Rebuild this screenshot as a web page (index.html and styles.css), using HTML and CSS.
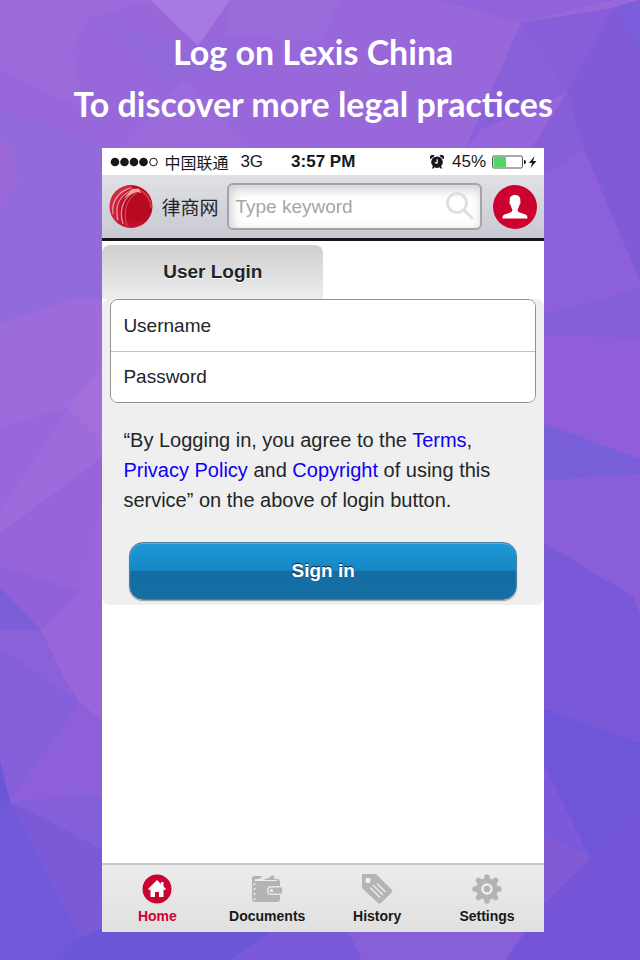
FILE: index.html
```
<!DOCTYPE html>
<html lang="en">
<head>
  <meta charset="utf-8">
  <meta name="viewport" content="width=device-width, initial-scale=1">
  <title>Lexis China - Login</title>
  <link rel="stylesheet" href="styles.css">
</head>
<body>
  <!-- low poly background -->
  <svg class="backdrop" viewBox="0 0 640 960" preserveAspectRatio="none" aria-hidden="true">
    <rect width="640" height="960" fill="#9867d9"/>
    <path fill="#9c6bdb" d="M0 0H150L88 18 72 48 85 110 0 70z"/>
    <path fill="#a67ae0" d="M150 0H230L198 46z"/>
    <path fill="#9369da" d="M88 18L198 46 225 35 250 62 186 80 173 92z"/>
    <path fill="#9a6bdb" d="M230 0H340L320 42 225 35z"/>
    <path fill="#9c6bdb" d="M186 80L250 150H120L173 92z"/>
    <path fill="#926ada" d="M0 110L30 120 110 150V299H70L0 324z"/>
    <path fill="#9b68d9" d="M0 140H8L20 182 0 209z"/>
    <path fill="#9c6cdc" d="M0 324L70 299H110V408H68L0 427z"/>
    <path fill="#a46fda" d="M68 408L110 356V450z"/>
    <path fill="#9967da" d="M0 427L68 408 0 511z"/>
    <path fill="#9e6bdc" d="M68 408L110 450V452L0 533V511z"/>
    <path fill="#9665da" d="M0 533L110 452V500L80 592 0 566z"/>
    <path fill="#9060d8" d="M0 566L80 592 41 630 0 587z"/>
    <path fill="#7a5fd9" d="M0 587L41 630H0z"/>
    <path fill="#9965da" d="M80 592L102 500H110V726L80 703 65 680 41 630z"/>
    <path fill="#8c60d9" d="M0 630H41L65 680 80 703 0 648z"/>
    <path fill="#845fd9" d="M0 648L80 703 10 801 0 760z"/>
    <path fill="#8d60da" d="M80 703L110 726V794L10 801z"/>
    <path fill="#7058d8" d="M0 801H10L80 938 110 925H300V960H0z"/>
    <path fill="#6956d8" d="M0 760L10 801H0z"/>
    <path fill="#835fd9" d="M10 801L110 794V853z"/>
    <path fill="#7b5ad8" d="M10 801L110 853V925L80 938z"/>
    <path fill="#6a57d7" d="M80 938L110 925H280L230 960H60z"/>
    <path fill="#9063da" d="M440 0H612L521 23z"/>
    <path fill="#875dd9" d="M612 8L521 23 567 93z"/>
    <path fill="#8a60da" d="M521 23L567 93 544 150H465z"/>
    <path fill="#9565db" d="M567 93L480 130 465 150H544z"/>
    <path fill="#865ed8" d="M567 93L584 150 530 184V150z"/>
    <path fill="#815ad8" d="M612 8L640 0V282L584 150 567 93z"/>
    <path fill="#7b5edc" d="M612 8L640 0V45z"/>
    <path fill="#8c60da" d="M530 184L584 150 640 282V288L530 318z"/>
    <path fill="#845fd9" d="M530 318L640 288V340L530 335z"/>
    <path fill="#905eda" d="M530 335L640 338V459L530 418z"/>
    <path fill="#7a5fda" d="M530 418L640 459V474L530 482z"/>
    <path fill="#8a5ed9" d="M530 482L640 474V615L634 597 530 534z"/>
    <path fill="#7a59d9" d="M530 534L634 597 640 615V743L530 703z"/>
    <path fill="#6f55d7" d="M530 703L640 743V807L590 859 530 738z"/>
    <path fill="#7b59d8" d="M530 738L590 859 530 828z"/>
    <path fill="#825ad6" d="M530 828L590 859 530 917z"/>
    <path fill="#7455d7" d="M590 859L640 807V960H500L530 917z"/>
    <path fill="#865fd9" d="M345 925H530L505 960H362z"/>
    <path fill="#785ad9" d="M280 925H345L362 960H230z"/>
  </svg>

  <h1 class="headline">Log on Lexis China<br>To discover more legal practices</h1>

  <div class="phone">
    <div class="status">
      <svg class="signal" viewBox="0 0 48 10" aria-label="Signal strength">
        <circle cx="5" cy="5" r="4.300"/><circle cx="14.500" cy="5" r="4.300"/><circle cx="24" cy="5" r="4.300"/><circle cx="33.500" cy="5" r="4.300"/>
        <circle class="empty" cx="43.500" cy="5" r="3.800"/>
      </svg>
      <span class="carrier">中国联通</span>
      <span class="network">3G</span>
      <b class="time">3:57 PM</b>
      <svg class="alarm" viewBox="0 0 14 14" aria-label="Alarm on">
        <path d="M0.500 4.200A2.600 2.600 0 0 1 4.600 0.800zM13.500 4.200A2.600 2.600 0 0 0 9.400 0.800zM3 11L1.800 13.500H3.400L4.500 12zM11 11L12.200 13.500H10.600L9.500 12z"/>
        <circle cx="7" cy="7.200" r="5.800"/>
        <path class="hands" d="M7.200 4.200V7.800H4.800"/>
      </svg>
      <span class="percent">45%</span>
      <svg class="battery" viewBox="0 0 45 14" aria-label="Charging">
        <rect x="0.5" y="1" width="30" height="12" rx="1.5" fill="#fff" stroke="#555"/>
        <rect x="1.5" y="2" width="12.5" height="10" fill="#4cd964"/>
        <path d="M32 5Q34 5 34 7T32 9z"/>
        <path d="M42.5 1L37 8H40.2L38.5 13 44.5 6H41z"/>
      </svg>
    </div>

    <header class="header">
      <svg class="logo" viewBox="0 0 44 44" aria-hidden="true">
        <defs>
          <radialGradient id="ball" cx="0.6" cy="0.45" r="0.6">
            <stop offset="0" stop-color="#b80a24"/>
            <stop offset="0.6" stop-color="#b60a22"/>
            <stop offset="1" stop-color="#cc1434"/>
          </radialGradient>
        </defs>
        <circle cx="22" cy="21.500" r="21.500" fill="url(#ball)"/>
        <path fill="#d02a42" d="M22 0C9 1 1 10 1 21.500C1 29 5 35 10 39C5 24 10 10 25 4z"/>
        <path fill="none" stroke="#e8949a" stroke-width="1.300" d="M22 3C10 6 2 16 4 29M24 5C12 9 5 19 9 35M26 7C16 11 9 23 14 39"/>
        <path fill="none" stroke="#c01c34" stroke-width="1.600" d="M23 4C11 8 4 18 6.500 32M25 6C14 10 7 21 11.500 37"/>
        <path fill="none" stroke="#d85464" stroke-width="1" d="M28 8C19 13 13 25 18 41"/>
        <path fill="#f0a890" d="M23 4L30 3.500 32 8 28 7 20 10 15 13z"/>
        <path fill="none" stroke="#dd3c54" stroke-width="1.500" d="M31 5C38 9 42 15 42 23"/>
      </svg>
      <span class="brand">律商网</span>
      <div class="search">
        <input class="search-input" type="text" placeholder="Type keyword" aria-label="Search">
        <button class="search-button" type="button" aria-label="Go">
          <svg viewBox="0 0 30 30"><circle cx="12" cy="11" r="9.500"/><path d="M19 18L28 27"/></svg>
        </button>
      </div>
      <button class="account" type="button" aria-label="Account">
        <svg viewBox="0 0 44 44"><path d="M22 10C17.500 10 16.300 13 16.700 16.500 16.200 18 16.700 19.500 17.700 20 18 22.500 19.200 23.500 19.400 25 19.200 27 17.500 27.500 14.500 28.500 10.500 29.500 9.500 30.500 9.500 33.500H34.500C34.500 30.500 33.500 29.500 29.500 28.500 26.500 27.500 24.800 27 24.600 25 24.800 23.500 26 22.500 26.300 20 27.300 19.500 27.800 18 27.300 16.500 27.700 13 26.500 10 22 10z"/></svg>
      </button>
    </header>

    <main class="content">
      <h2 class="tab">User Login</h2>
      <form class="login">
        <div class="fields">
          <input class="field" type="text" placeholder="Username" aria-label="Username">
          <input class="field" type="password" placeholder="Password" aria-label="Password">
        </div>
        <p class="terms">
          “By Logging in, you agree to the <a href="#">Terms</a>,<br>
          <a href="#">Privacy Policy</a> and <a href="#">Copyright</a> of using this<br>
          service” on the above of login button.
        </p>
        <button class="sign-in" type="button">Sign in</button>
      </form>
    </main>

    <nav class="tabbar">
      <a class="item active" href="#">
        <svg viewBox="0 0 30 30">
          <circle cx="15" cy="15" r="14.500"/>
          <path fill="#fff" d="M15 6L6 15 7.200 16.200 8.500 15.200V23H13V18H17V23H21.500V15.200L22.800 16.200 24 15 21.500 12.500V8H19V10z"/>
        </svg>
        Home
      </a>
      <a class="item" href="#">
        <svg viewBox="0 0 32 30">
          <path d="M3 2H12L8 5H4V6H11L22 1 24 5H27Q29 6 29 8V12H20Q16 12 16 16.500T20 21H29V25Q29 28 26 28H4Q1 28 1 25V4Q1 2 3 2z"/>
          <path d="M20 13.500H31V19.500H20Q17.500 19.500 17.500 16.500T20 13.500z"/>
          <circle cx="20.500" cy="16.500" r="1.500" fill="#eee"/>
          <path fill="none" stroke="#eee" stroke-width="1" d="M4 6.500H26M12 5.500L20 2.500"/>
          <path fill="none" stroke="#eee" stroke-width="1.500" stroke-dasharray="2 3" d="M3.500 9V27"/>
        </svg>
        Documents
      </a>
      <a class="item" href="#">
        <svg viewBox="0 0 32 30">
          <path d="M2 0H15L31 16Q32 17 31 18L20 29Q18.500 30 17 29L1 14V1Q1 0 2 0z"/>
          <circle cx="7" cy="6.500" r="2.700" fill="#eee"/>
          <path fill="none" stroke="#eee" stroke-width="1.400" d="M9 13.500L19 23.500M12 11L22 21M16 9.500L24.500 18"/>
        </svg>
        History
      </a>
      <a class="item" href="#">
        <svg viewBox="0 0 30 30">
          <circle cx="15" cy="15" r="11"/>
          <path fill="none" stroke="#b3b4b6" stroke-width="5.500" stroke-linecap="round" d="M15 3V27M3 15H27M6.500 6.500L23.500 23.500M23.500 6.500L6.500 23.500"/>
          <circle cx="15" cy="15" r="4.500" fill="none" stroke="#eee" stroke-width="2.500"/>
        </svg>
        Settings
      </a>
    </nav>
  </div>
</body>
</html>
```
FILE: styles.css
```
* {
  box-sizing: border-box;
}
body {
  display: flex;
  flex-direction: column;
  min-height: 100vh;
  margin: 0;
  padding: 26px 15% 28px 16%;
  background: #7a5ad8;
  color: #222628;
  font-family: "Liberation Sans", Arial, "Noto Sans CJK SC", sans-serif;
  font-size: 19px;
}
.backdrop {
  position: absolute;
  top: 0;
  left: 0;
  z-index: -1;
  width: 100%;
  height: 100%;
}
.headline {
  margin: 0 -40px 18px -60px;
  color: #fff;
  font-family: Lato, sans-serif;
  font-size: 34px;
  font-weight: bold;
  line-height: 52px;
  text-align: center;
}
button, input {
  font: inherit;
}
.phone {
  display: flex;
  flex: 1;
  flex-direction: column;
  background: #fff;
}

/* status bar */
.status {
  display: flex;
  align-items: center;
  height: 27px;
  padding: 0 7px 0 8px;
  color: #14181a;
  font-size: 17px;
}
.status svg {
  fill: #14181a;
}
.signal {
  width: 48px;
  height: 10px;
}
.signal .empty {
  fill: none;
  stroke: #14181a;
}
.carrier {
  margin-left: 6px;
  font-size: 16px;
}
.network {
  margin-left: 12px;
}
.time {
  margin-left: 28px;
}
.alarm {
  width: 14px;
  height: 14px;
  margin-left: auto;
}
.status .hands {
  fill: none;
  stroke: #fff;
  stroke-width: 1.2;
}
.percent {
  margin: 0 6px 0 8px;
}
.battery {
  width: 45px;
  height: 14px;
}

/* header with search */
.header {
  display: flex;
  align-items: center;
  height: 66px;
  padding: 0 7px;
  border-bottom: 3px solid #17171b;
  background: linear-gradient(#e0e0e5, #c8c9d2);
}
.logo {
  width: 44px;
  height: 44px;
}
.brand {
  margin: 0 9px 0 8px;
}
.search {
  display: flex;
  flex: 1;
  align-items: center;
  min-width: 0;
  height: 47px;
  margin-right: 11px;
  border: 2px solid #a2a4a7;
  border-radius: 6px;
  background: #fff;
  box-shadow: inset 2px 4px 12px #ccc;
}
.search-input {
  flex: 1;
  width: 0;
  padding: 0 6px;
  border: 0;
  background: none;
}
.search-input::placeholder {
  color: #a6a6a6;
  opacity: 1;
}
.search-button {
  width: 30px;
  height: 30px;
  margin-right: 5px;
  padding: 0;
  border: 0;
  background: none;
}
.search-button svg {
  display: block;
  fill: none;
  stroke: #e0e0e0;
  stroke-width: 3;
}
.account {
  width: 44px;
  height: 44px;
  padding: 0;
  border: 0;
  border-radius: 50%;
  background: #cb0230;
}
.account svg {
  display: block;
  fill: #fff;
}

/* login form */
.content {
  flex: 1;
  padding-top: 4px;
}
.tab {
  width: 50%;
  margin: 0;
  border-radius: 8px 8px 0 0;
  background: linear-gradient(#cfcfcf, #ededed);
  font-size: 19px;
  line-height: 54px;
  text-align: center;
  text-shadow: 0 1px 0 #fff;
}
.login {
  padding: 0 8px 5px;
  border-radius: 8px;
  background: #efefef;
}
.fields {
  overflow: hidden;
  border: 1px solid #929292;
  border-radius: 8px;
  background: #fff;
}
.field {
  display: block;
  width: 100%;
  height: 51px;
  padding: 0 12px;
  border: 0;
  background: #fff;
}
.field + .field {
  border-top: 1px solid #c4c4c8;
}
.field::placeholder {
  color: #222628;
  opacity: 1;
}
.terms {
  margin: 22px 13px 27px;
  font-size: 20px;
  line-height: 30px;
}
.terms a {
  color: #0d00f5;
  text-decoration: none;
}
.sign-in {
  display: block;
  width: calc(100% - 38px);
  height: 58px;
  margin: 0 auto;
  border: 1px solid #4c7f9e;
  border-radius: 14px;
  background: linear-gradient(#1e98d8, #1786c4 49%, #146da2 50%, #146ea4);
  box-shadow: inset 0 1px 1px #5db4e0, 0 1px 1px #999;
  color: #fff;
  font-weight: bold;
  text-shadow: 0 -1px 1px #123;
}

/* bottom navigation */
.tabbar {
  display: grid;
  grid-template-columns: repeat(4, 1fr);
  padding-right: 2px;
  border-top: 2px solid #c8c8c8;
  background: linear-gradient(#ececec, #e0e0e0);
}
.item {
  display: flex;
  flex-direction: column;
  align-items: center;
  gap: 4px;
  padding: 9px 0 7px;
  color: #17191b;
  font-size: 14px;
  font-weight: bold;
  line-height: 17px;
  text-decoration: none;
}
.item svg {
  height: 30px;
  fill: #b3b4b6;
}
.active {
  color: #cb0230;
}
.active svg {
  fill: #cb0230;
}
```
